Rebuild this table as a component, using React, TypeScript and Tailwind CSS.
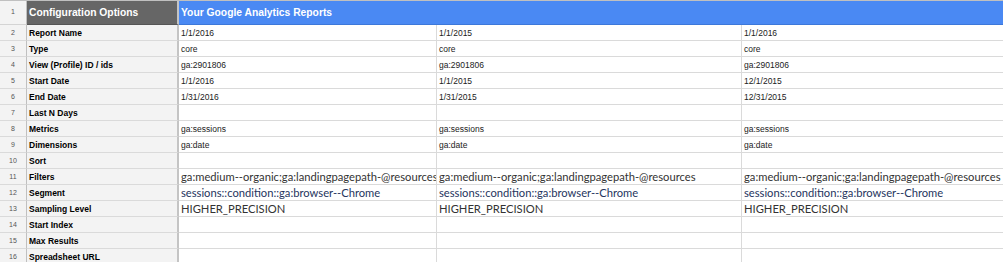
const rows: { label: string; values: string[]; kind?: 'raleway' | 'segment' }[] = [
  { label: 'Report Name', values: ['1/1/2016', '1/1/2015', '1/1/2016'] },
  { label: 'Type', values: ['core', 'core', 'core'] },
  { label: 'View (Profile) ID / ids', values: ['ga:2901806', 'ga:2901806', 'ga:2901806'] },
  { label: 'Start Date', values: ['1/1/2016', '1/1/2015', '12/1/2015'] },
  { label: 'End Date', values: ['1/31/2016', '1/31/2015', '12/31/2015'] },
  { label: 'Last N Days', values: ['', '', ''] },
  { label: 'Metrics', values: ['ga:sessions', 'ga:sessions', 'ga:sessions'] },
  { label: 'Dimensions', values: ['ga:date', 'ga:date', 'ga:date'] },
  { label: 'Sort', values: ['', '', ''] },
  {
    label: 'Filters',
    kind: 'raleway',
    values: [
      'ga:medium--organic;ga:landingpagepath-@resources',
      'ga:medium--organic;ga:landingpagepath-@resources',
      'ga:medium--organic;ga:landingpagepath-@resources',
    ],
  },
  {
    label: 'Segment',
    kind: 'segment',
    values: [
      'sessions::condition::ga:browser--Chrome',
      'sessions::condition::ga:browser--Chrome',
      'sessions::condition::ga:browser--Chrome',
    ],
  },
  {
    label: 'Sampling Level',
    kind: 'raleway',
    values: ['HIGHER_PRECISION', 'HIGHER_PRECISION', 'HIGHER_PRECISION'],
  },
  { label: 'Start Index', values: ['', '', ''] },
  { label: 'Max Results', values: ['', '', ''] },
  { label: 'Spreadsheet URL', values: ['', '', ''] },
];

const cols = 'grid grid-cols-[27px_152px_258px_305px_1fr]';

export default function App() {
  return (
    <div
      className="w-[1003px] h-[262px] overflow-hidden bg-white border-t border-[#c0c0c0]"
      style={{ fontFamily: '"Liberation Sans", Arial, sans-serif' }}
    >
      <div className={`${cols} h-[24px]`}>
        <div className="flex items-center justify-center bg-[#f3f3f3] border-r border-[#c0c0c0] border-b border-b-[#d4d4d4] text-[7px] text-[#555]">
          1
        </div>
        <div className="flex items-center pl-[2px] bg-[#666666] border-r-2 border-[#c4c4c4] border-b border-b-[#555] text-white font-bold text-[10.3px] whitespace-nowrap">
          Configuration Options
        </div>
        <div className="col-span-3 flex items-center pl-[2px] bg-[#4a89f3] border-b border-[#3d78d9] text-white font-bold text-[10.3px] whitespace-nowrap">
          Your Google Analytics Reports
        </div>
      </div>
      {rows.map((row, i) => (
        <div key={row.label} className={`${cols} h-[16px]`}>
          <div className="flex items-center justify-center pt-[1px] bg-[#f3f3f3] border-r border-[#c0c0c0] border-b border-b-[#dadada] text-[7px] text-[#555]">
            {i + 2}
          </div>
          <div className="flex items-center pl-[2px] pt-[1px] bg-[#f3f3f3] border-r-2 border-[#c4c4c4] border-b border-b-[#dadada] text-black font-bold text-[8.5px] whitespace-nowrap overflow-hidden">
            {row.label}
          </div>
          {row.values.map((v, j) => (
            <div
              key={j}
              className={`flex items-center pl-[2px] pt-[1px] border-b border-[#dadada] whitespace-nowrap overflow-hidden ${
                j < 2 ? 'border-r' : ''
              } ${
                row.kind === 'raleway'
                  ? 'text-[11.2px] text-[#333]'
                  : row.kind === 'segment'
                    ? 'text-[11.2px] text-[#26355e]'
                    : 'text-[8.5px] text-[#222]'
              }`}
              style={row.kind ? { fontFamily: 'Lato, "Open Sans", sans-serif' } : undefined}
            >
              {v}
            </div>
          ))}
        </div>
      ))}
    </div>
  );
}
